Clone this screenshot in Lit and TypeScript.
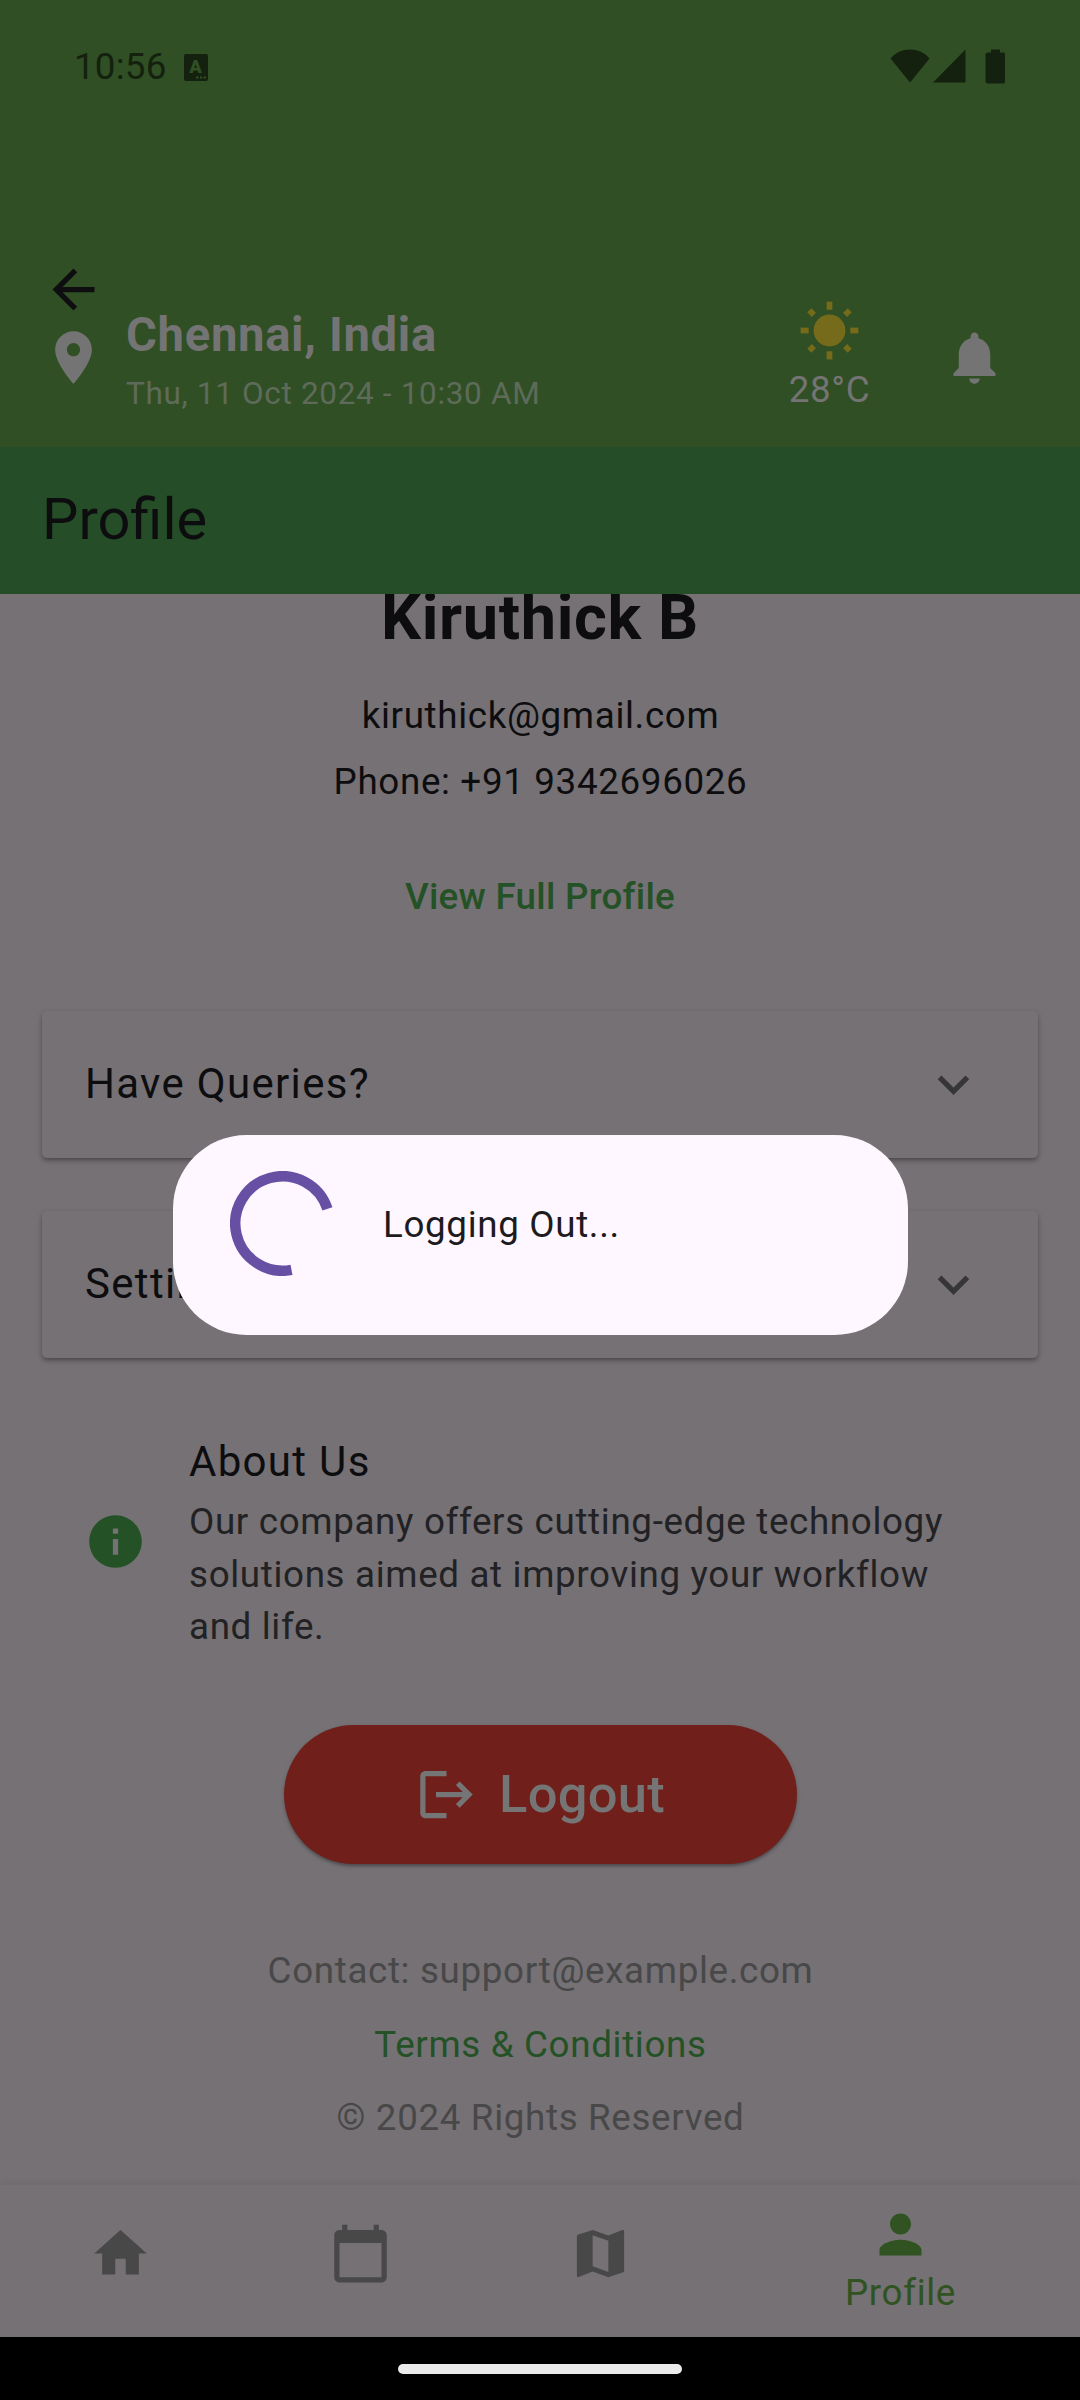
import { LitElement, html, css, svg } from "lit";
import { customElement, property } from "lit/decorators.js";

const ICONS: Record<string, string> = {
  back: "M20 11H7.83l5.59-5.59L12 4l-8 8 8 8 1.41-1.41L7.83 13H20v-2z",
  pin: "M12 2C8.13 2 5 5.13 5 9c0 5.25 7 13 7 13s7-7.75 7-13c0-3.87-3.13-7-7-7zm0 9.5c-1.38 0-2.5-1.12-2.5-2.5s1.12-2.5 2.5-2.5 2.5 1.12 2.5 2.5-1.12 2.5-2.5 2.5z",
  bell: "M12 22c1.1 0 2-.9 2-2h-4c0 1.1.89 2 2 2zm6-6v-5c0-3.07-1.64-5.64-4.5-6.32V4c0-.83-.67-1.5-1.5-1.5s-1.5.67-1.5 1.5v.68C7.63 5.36 6 7.92 6 11v5l-2 2v1h16v-1l-2-2z",
  chevron: "M16.59 8.59L12 13.17 7.41 8.59 6 10l6 6 6-6z",
  info: "M12 2C6.48 2 2 6.48 2 12s4.48 10 10 10 10-4.48 10-10S17.52 2 12 2zm1 15h-2v-6h2v6zm0-8h-2V7h2v2z",
  logout: "M17 7l-1.41 1.41L18.17 11H8v2h10.17l-2.58 2.58L17 17l5-5zM4 5h8V3H4c-1.1 0-2 .9-2 2v14c0 1.1.9 2 2 2h8v-2H4V5z",
  home: "M10 20v-6h4v6h5v-8h3L12 3 2 12h3v8z",
  calendar: "M20 3h-1V1h-2v2H7V1H5v2H4c-1.1 0-2 .9-2 2v16c0 1.1.9 2 2 2h16c1.1 0 2-.9 2-2V5c0-1.1-.9-2-2-2zm0 18H4V8h16v13z",
  map: "M20.5 3l-.16.03L15 5.1 9 3 3.36 4.9c-.21.07-.36.25-.36.48V20.5c0 .28.22.5.5.5l.16-.03L9 18.9l6 2.1 5.64-1.9c.21-.07.36-.25.36-.48V3.5c0-.28-.22-.5-.5-.5zM15 19l-6-2.11V5l6 2.11V19z",
  person: "M12 12c2.21 0 4-1.79 4-4s-1.79-4-4-4-4 1.79-4 4 1.79 4 4 4zm0 2c-2.67 0-8 1.34-8 4v2h16v-2c0-2.66-5.33-4-8-4z",
};

@customElement("md-icon")
class MdIcon extends LitElement {
  @property() name = "";
  static styles = css`
    :host { display: block; width: 63px; height: 63px; flex: none; }
    .glyph { display: block; width: 100%; height: 100%; fill: currentColor; }
  `;
  render() {
    return html`<svg class="glyph" viewBox="0 0 24 24">${svg`<path d=${ICONS[this.name]}></path>`}</svg>`;
  }
}

@customElement("app-root")
class AppRoot extends LitElement {
  static styles = css`
    :host {
      display: block;
      position: relative;
      width: 1080px;
      height: 2400px;
      overflow: hidden;
      background: #757175;
      color: #0d0d0f;
      font-family: Roboto, "Liberation Sans", sans-serif;
      font-size: 36.75px;
      line-height: 52.5px;
      letter-spacing: 0.66px;
    }
    .screen { display: flex; flex-direction: column; height: 2400px; }
    .header { height: 447px; background: #304f24; flex: none; }
    .status {
      box-sizing: border-box; height: 132px; padding: 0 75px 0 74px;
      display: flex; align-items: center; color: #14210f; letter-spacing: 0.2px;
    }
    .clock { line-height: 52px; padding-top: 2px; }
    .notif {
      box-sizing: border-box; width: 24px; height: 27px; margin: 2px 0 0 17px; border-radius: 2px;
      background: #14210f; color: #304f24; position: relative;
      font-size: 18.5px; line-height: 26px; font-weight: 900; text-align: center; letter-spacing: 0;
    }
    .dots { position: absolute; right: 2px; bottom: 2px; width: 10px; height: 3px; fill: #304f24; }
    .signals { margin: 0 0 0 auto; display: block; width: 115px; height: 35px; fill: #14210f; }
    .back { padding: 126px 0 0 42px; height: 63px; color: #0e0e10; }
    .place { display: flex; padding: 0 42px; margin-top: -12px; height: 130px; color: #747474; }
    .pin { margin-top: 17px; }
    .where { margin-left: 21px; flex: 1; }
    .city { font-size: 47.25px; font-weight: 700; line-height: 60px; margin-top: -4px; letter-spacing: 0.66px; }
    .date { font-size: 31.5px; line-height: 42px; margin-top: 8px; color: #5f6b5a; letter-spacing: 0.66px; }
    .weather { width: 120px; display: flex; flex-direction: column; align-items: center; margin-right: 54px; }
    .sun { display: block; width: 63px; height: 63px; margin-top: -10px; fill: #756b1b; }
    .temp { margin-top: 2px; padding-left: 1px; }
    .bell { margin: 17px 32px 0 0; }
    .titlebar {
      box-sizing: border-box; flex: none; height: 147px; padding-left: 42px;
      background: #254d28; font-size: 57.75px; line-height: 144px; letter-spacing: 0;
    }
    .body { flex: none; height: 1591px; overflow: hidden; display: flex; flex-direction: column; align-items: center; }
    .name { margin-top: -18px; height: 84px; line-height: 84px; font-size: 63px; font-weight: 700; letter-spacing: 0.66px; flex: none; }
    .email { margin-top: 30px; padding-left: 1px; }
    .phone { margin-top: 13.5px; padding-left: 1px; }
    .view { margin-top: 62.5px; color: #245126; font-weight: 500; letter-spacing: 0.26px; }
    .cards { display: flex; flex-direction: column; gap: 52.5px; margin-top: 87.5px; width: 996px; }
    .card {
      box-sizing: border-box; height: 147px; padding: 0 53px 0 43px; border-radius: 5px;
      display: flex; align-items: center; justify-content: space-between;
      background: #757175; font-size: 42px; letter-spacing: 1.31px;
      box-shadow: 0 3px 4px -1px rgba(0,0,0,.25), 0 2px 5px rgba(0,0,0,.12), 0 2px 8px rgba(0,0,0,.06);
    }
    .chev { color: #363538; }
    .about { box-sizing: border-box; width: 1080px; padding: 0 84px; margin-top: 72.5px; display: flex; }
    .info { color: #245126; margin-top: 80px; }
    .blurb { margin-left: 42px; width: 790px; }
    .heading { font-size: 42px; line-height: 63px; letter-spacing: 1.31px; }
    .desc { margin-top: 3px; color: #222124; }
    .logout {
      margin-top: 71.5px; flex: none; width: 513px; height: 139px; border-radius: 70px;
      display: flex; align-items: center; justify-content: center; gap: 21px;
      background: #701f1a; color: #757575; font-size: 52.5px; font-weight: 500; letter-spacing: 0.26px;
      box-shadow: 0 3px 3px -1px rgba(0,0,0,.25), 0 2px 5px rgba(0,0,0,.14);
    }
    .logout-label { margin-top: -1px; }
    .foot { display: flex; flex-direction: column; align-items: center; gap: 21px; margin-top: 81px; padding-left: 1px; color: #484848; }
    .terms { color: #245126; }
    .nav {
      flex: none; height: 152px; display: flex; background: #757175; color: #484848;
      box-shadow: 0 -4px 5px rgba(0,0,0,.045);
    }
    .tab { width: 240px; display: flex; flex-direction: column; align-items: center; padding-top: 37px; }
    .active { width: 360px; padding-top: 18px; color: #305321; }
    .label { margin-top: 1px; padding-left: 1px; }
    .gesture { flex: 1; background: #000; display: flex; justify-content: center; padding-top: 27px; }
    .handle { width: 284px; height: 10px; border-radius: 5px; background: #ebebeb; }
    .overlay { position: absolute; inset: 132px 0 63px; display: flex; align-items: center; justify-content: center; }
    .dialog {
      box-sizing: border-box; width: 735px; height: 200px; border-radius: 73.5px; background: #fef7ff;
      color: #1d1b20; padding: 36.5px 57.5px; display: flex;
    }
    .spinner { display: block; width: 105px; height: 105px; fill: none; stroke: #6750a4; stroke-width: 10.5; }
    .message { margin: 28px 0 0 48px; }
  `;

  render() {
    // Arc runs clockwise from 79 degrees to 342 degrees around the 105px circle.
    const point = (deg: number) => {
      const a = (deg * Math.PI) / 180;
      return `${52.5 + 47.25 * Math.cos(a)} ${52.5 + 47.25 * Math.sin(a)}`;
    };
    return html`
      <div class="screen">
        <div class="header">
          <div class="status">
            <span class="clock">10:56</span>
            <span class="notif">A<svg class="dots" viewBox="0 0 10 3"><circle cx="1.3" cy="1.5" r="1.2"></circle><circle cx="5" cy="1.5" r="1.2"></circle><circle cx="8.7" cy="1.5" r="1.2"></circle></svg></span>
            <svg class="signals" viewBox="0 0 115 35">
              <path d="M0.5 9.5Q8 .5 20 .5T39.5 9.5L20 33.5Z"></path>
              <path d="M43 33.5L75.5 .5V33.5Z"></path>
              <path d="M101 .5h9v3h3q2.5 0 2.500 2.500v26q0 2.500-2.500 2.500h-15q-2.500 0-2.500-2.500v-26q0-2.500 2.500-2.500h3z"></path>
            </svg>
          </div>
          <div class="back"><md-icon name="back"></md-icon></div>
          <div class="place">
            <md-icon class="pin" name="pin"></md-icon>
            <div class="where">
              <div class="city">Chennai, India</div>
              <div class="date">Thu, 11 Oct 2024 - 10:30 AM</div>
            </div>
            <div class="weather">
              <svg class="sun" viewBox="0 0 24 24">
                <circle cx="12" cy="12" r="6.05"></circle>
                ${[0, 45, 90, 135, 180, 225, 270, 315].map(
                  (d) => svg`<rect x="10.9" y=${d % 90 ? 1.1 : 1} width="2.2" height=${d % 90 ? 2.5 : 3.1}
                    transform=${`rotate(${d} 12 12)`}></rect>`
                )}
              </svg>
              <span class="temp">28°C</span>
            </div>
            <md-icon class="bell" name="bell"></md-icon>
          </div>
        </div>
        <div class="titlebar">Profile</div>
        <div class="body">
          <div class="name">Kiruthick B</div>
          <div class="email">kiruthick@gmail.com</div>
          <div class="phone">Phone: +91 9342696026</div>
          <div class="view">View Full Profile</div>
          <div class="cards">
            ${["Have Queries?", "Settings"].map(
              (t) => html`<div class="card"><span>${t}</span><md-icon class="chev" name="chevron"></md-icon></div>`
            )}
          </div>
          <div class="about">
            <md-icon class="info" name="info"></md-icon>
            <div class="blurb">
              <div class="heading">About Us</div>
              <div class="desc">Our company offers cutting-edge technology solutions aimed at improving your workflow and life.</div>
            </div>
          </div>
          <div class="logout"><md-icon name="logout"></md-icon><span class="logout-label">Logout</span></div>
          <div class="foot">
            <span>Contact: support@example.com</span>
            <span class="terms">Terms &amp; Conditions</span>
            <span>© 2024 Rights Reserved</span>
          </div>
        </div>
        <div class="nav">
          ${["home", "calendar", "map"].map((n) => html`<div class="tab"><md-icon name=${n}></md-icon></div>`)}
          <div class="tab active"><md-icon name="person"></md-icon><span class="label">Profile</span></div>
        </div>
        <div class="gesture"><div class="handle"></div></div>
      </div>
      <div class="overlay">
        <div class="dialog">
          <svg class="spinner" viewBox="0 0 105 105">
            <path d=${`M${point(79)}A47.25 47.25 0 1 1 ${point(342)}`}></path>
          </svg>
          <span class="message">Logging Out...</span>
        </div>
      </div>
    `;
  }
}
